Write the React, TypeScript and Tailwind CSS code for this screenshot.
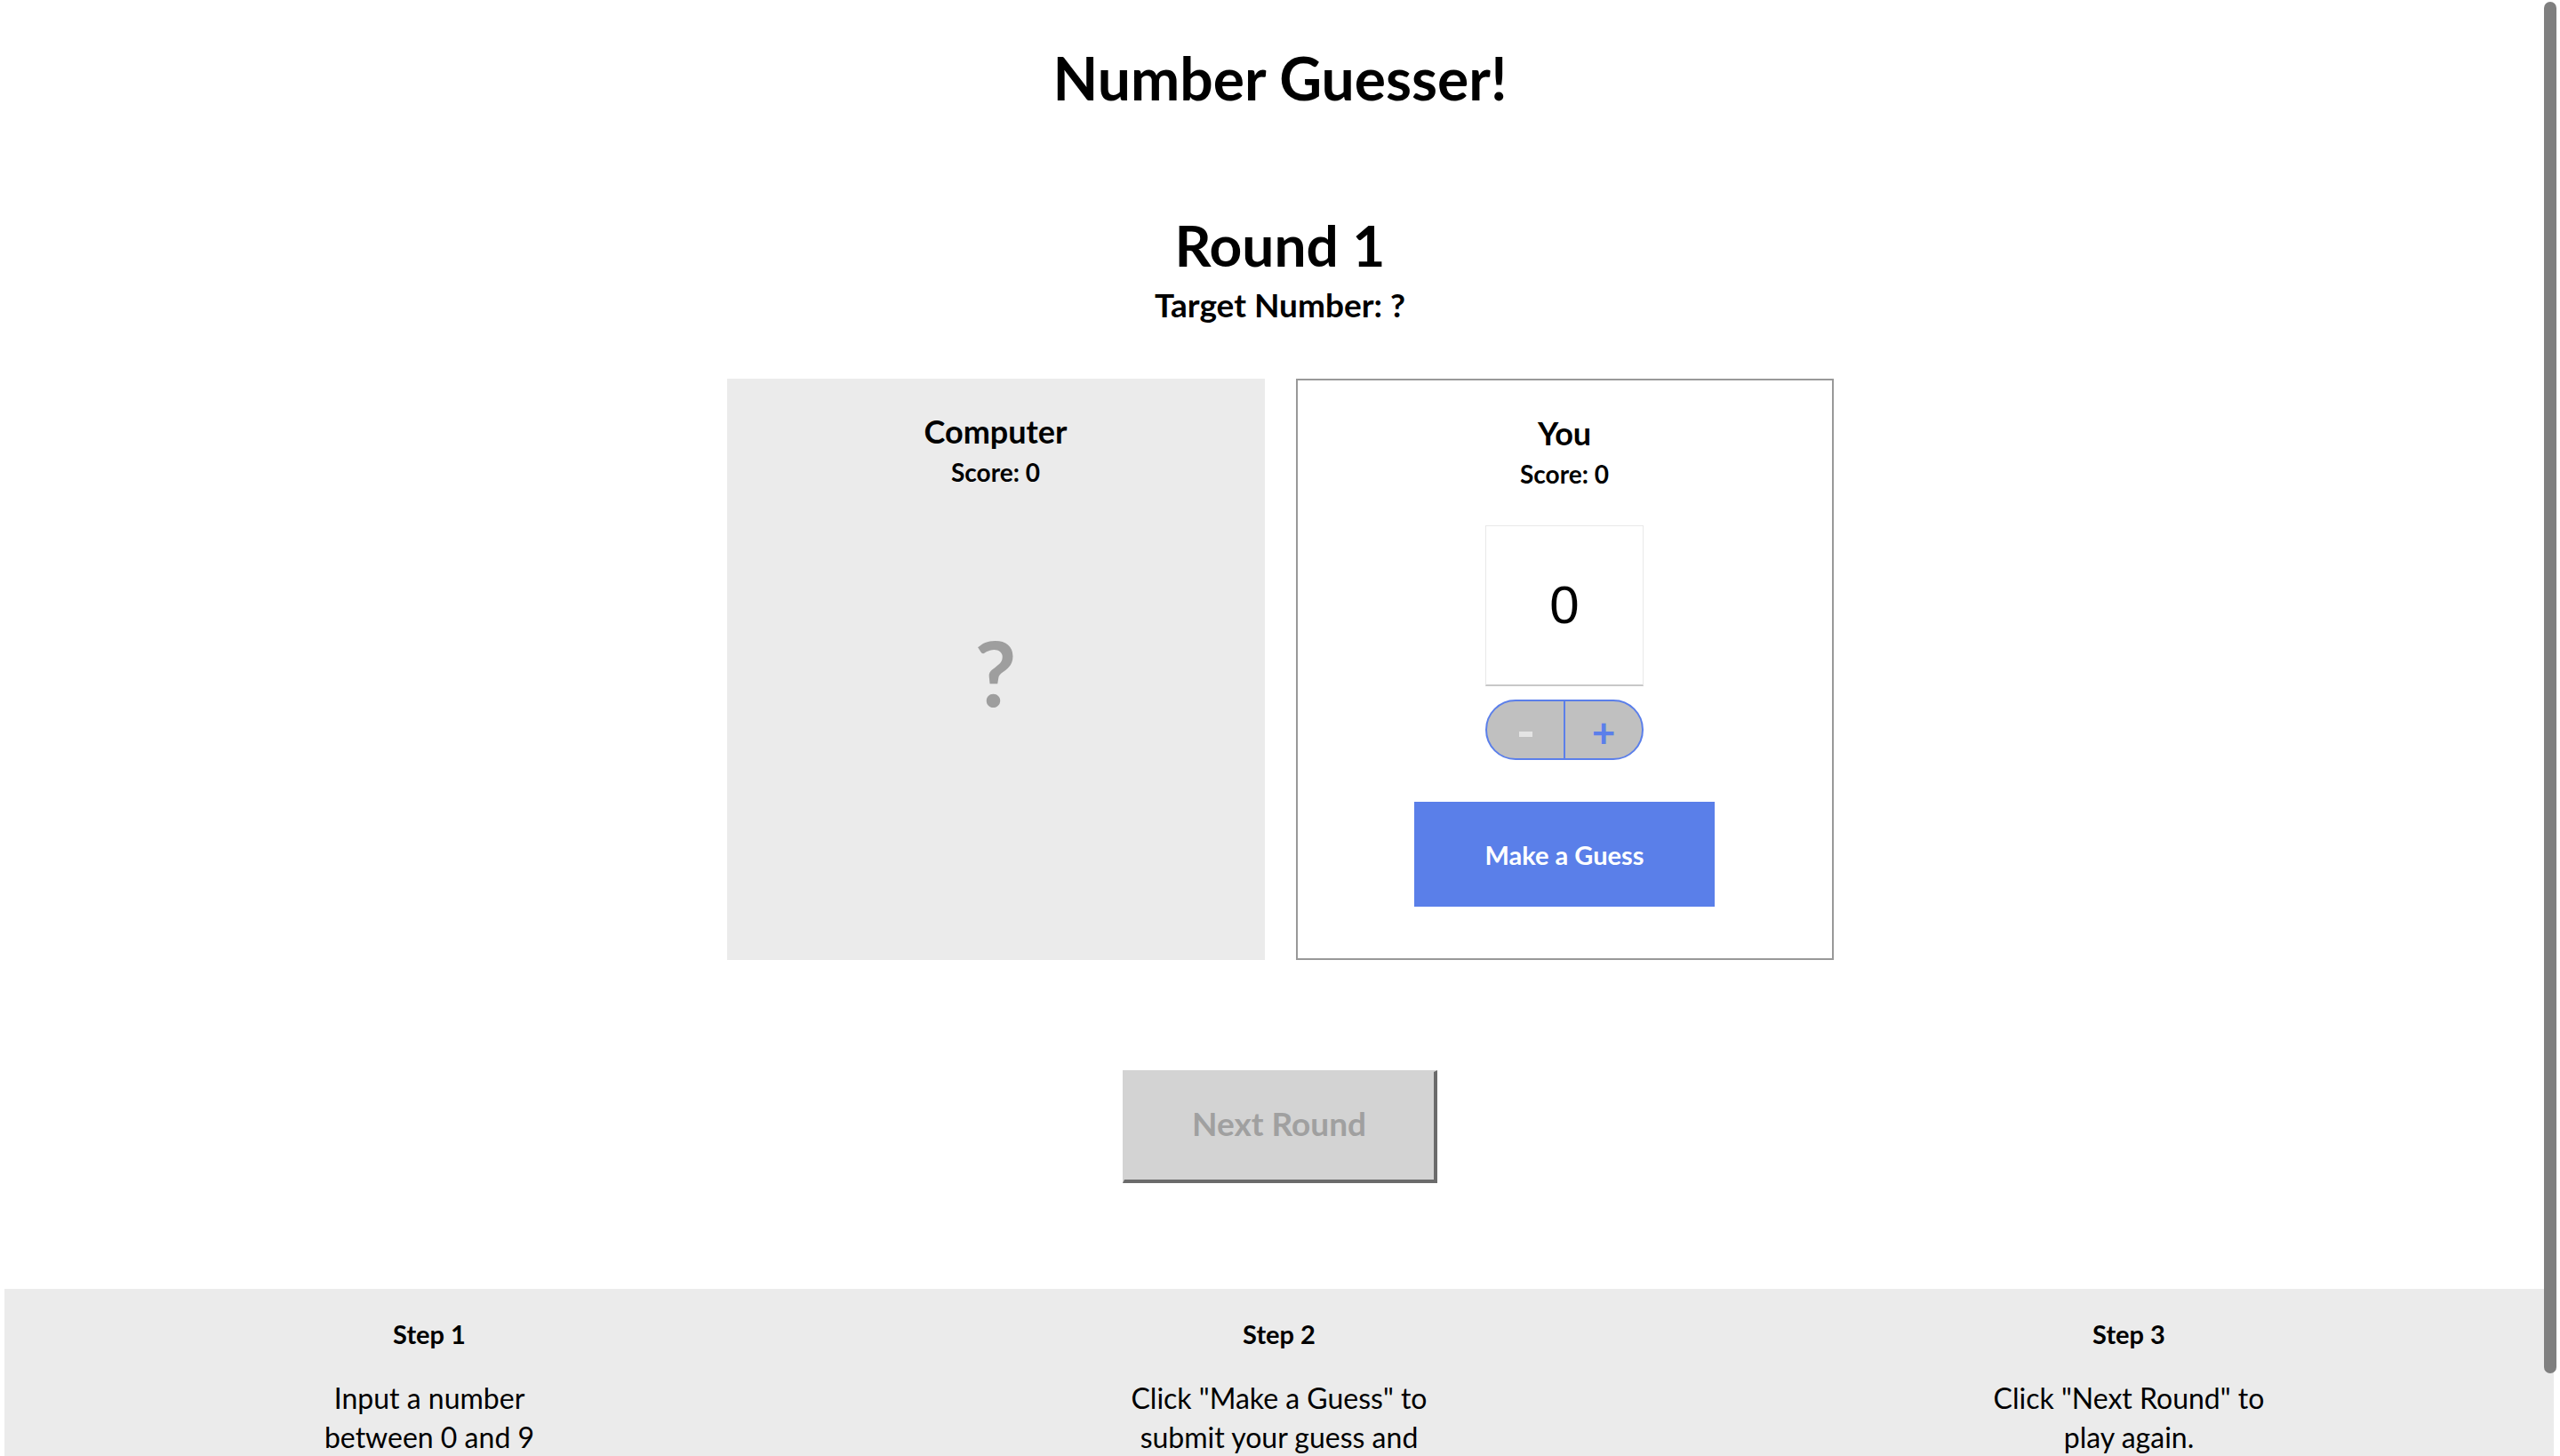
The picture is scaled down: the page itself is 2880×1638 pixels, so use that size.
import React from "react";

export default function App() {
  return (
    <div className="relative w-full h-[1638px] overflow-hidden bg-white text-black font-['Lato','Noto_Sans',sans-serif]">
      {/* Title */}
      <div className="h-[176px] flex items-center justify-center">
        <h1 className="text-[66px] font-bold leading-none">Number Guesser!</h1>
      </div>

      {/* Round info */}
      <div className="mt-[59px] flex flex-col items-center">
        <div className="h-[82px] flex items-center text-[64px] font-bold leading-none">Round 1</div>
        <div className="h-[50px] flex items-center text-[37px] font-bold leading-none">Target Number: ?</div>
      </div>

      {/* Panels */}
      <div className="mt-[59px] flex justify-center gap-[35px]">
        {/* Computer */}
        <div className="w-[605px] h-[654px] bg-[#ebebeb] flex flex-col items-center pt-[35px]">
          <div className="h-[48px] flex items-center text-[36px] font-bold leading-none">Computer</div>
          <div className="h-[40px] flex items-center text-[28px] font-bold leading-none mt-[2px]">Score: 0</div>
          <div className="mt-[150px] h-[110px] flex items-center text-[102px] font-bold leading-none text-[#9e9e9e]">?</div>
        </div>

        {/* You */}
        <div className="w-[605px] h-[654px] border-2 border-[#999999] bg-white flex flex-col items-center pt-[35px]">
          <div className="h-[48px] flex items-center text-[36px] font-bold leading-none">You</div>
          <div className="h-[40px] flex items-center text-[28px] font-bold leading-none mt-[2px]">Score: 0</div>
          <div className="mt-[38px] w-[178px] h-[181px] border border-[#e8e8e8] border-b-2 border-b-[#c8c8c8] bg-white flex items-center justify-center">
            <span className="font-['Liberation_Sans',Arial,sans-serif] text-[60px] leading-none">0</span>
          </div>
          <div className="mt-[15px] w-[178px] h-[68px] rounded-full border-2 border-[#5b7fea] bg-[#c0c0c0] flex overflow-hidden">
            <div className="flex-1 flex items-center justify-center border-r-2 border-[#5b7fea]">
              <span className="block w-[15px] h-[6px] bg-[#e4e4e4] mt-[9px]" />
            </div>
            <div className="flex-1 flex items-center justify-center">
              <span className="text-[46px] font-bold leading-none text-[#5b7fea] mt-[6px]">+</span>
            </div>
          </div>
          <button className="mt-[47px] w-[338px] h-[118px] bg-[#5a7fe9] text-white text-[29px] font-bold leading-none">
            Make a Guess
          </button>
        </div>
      </div>

      {/* Next Round */}
      <div className="mt-[124px] flex justify-center">
        <button className="w-[354px] h-[127px] bg-[#d3d3d3] border-solid border-t-2 border-l-2 border-r-4 border-b-4 border-t-[#d3d3d3] border-l-[#d3d3d3] border-r-[#6b6b6b] border-b-[#6b6b6b] text-[#a0a0a0] text-[37px] font-bold leading-none pb-[6px]">
          Next Round
        </button>
      </div>

      {/* Footer */}
      <div className="mt-[119px] ml-[5px] mr-[7px] bg-[#ebebeb] grid grid-cols-3 pt-[30px] pb-[60px]">
        <div className="flex flex-col items-center text-center">
          <div className="h-[40px] flex items-center text-[29px] font-bold leading-none">Step 1</div>
          <p className="mt-[31px] text-[32px] leading-[44px]">Input a number<br />between 0 and 9</p>
        </div>
        <div className="flex flex-col items-center text-center">
          <div className="h-[40px] flex items-center text-[29px] font-bold leading-none">Step 2</div>
          <p className="mt-[31px] text-[32px] leading-[44px]">Click "Make a Guess" to<br />submit your guess and<br />see who wins the round.</p>
        </div>
        <div className="flex flex-col items-center text-center">
          <div className="h-[40px] flex items-center text-[29px] font-bold leading-none">Step 3</div>
          <p className="mt-[31px] text-[32px] leading-[44px]">Click "Next Round" to<br />play again.</p>
        </div>
      </div>

      {/* Overlay scrollbar */}
      <div className="absolute right-[4px] top-[2px] w-[14px] h-[1543px] rounded-full bg-[#7f7f7f]" />
    </div>
  );
}
